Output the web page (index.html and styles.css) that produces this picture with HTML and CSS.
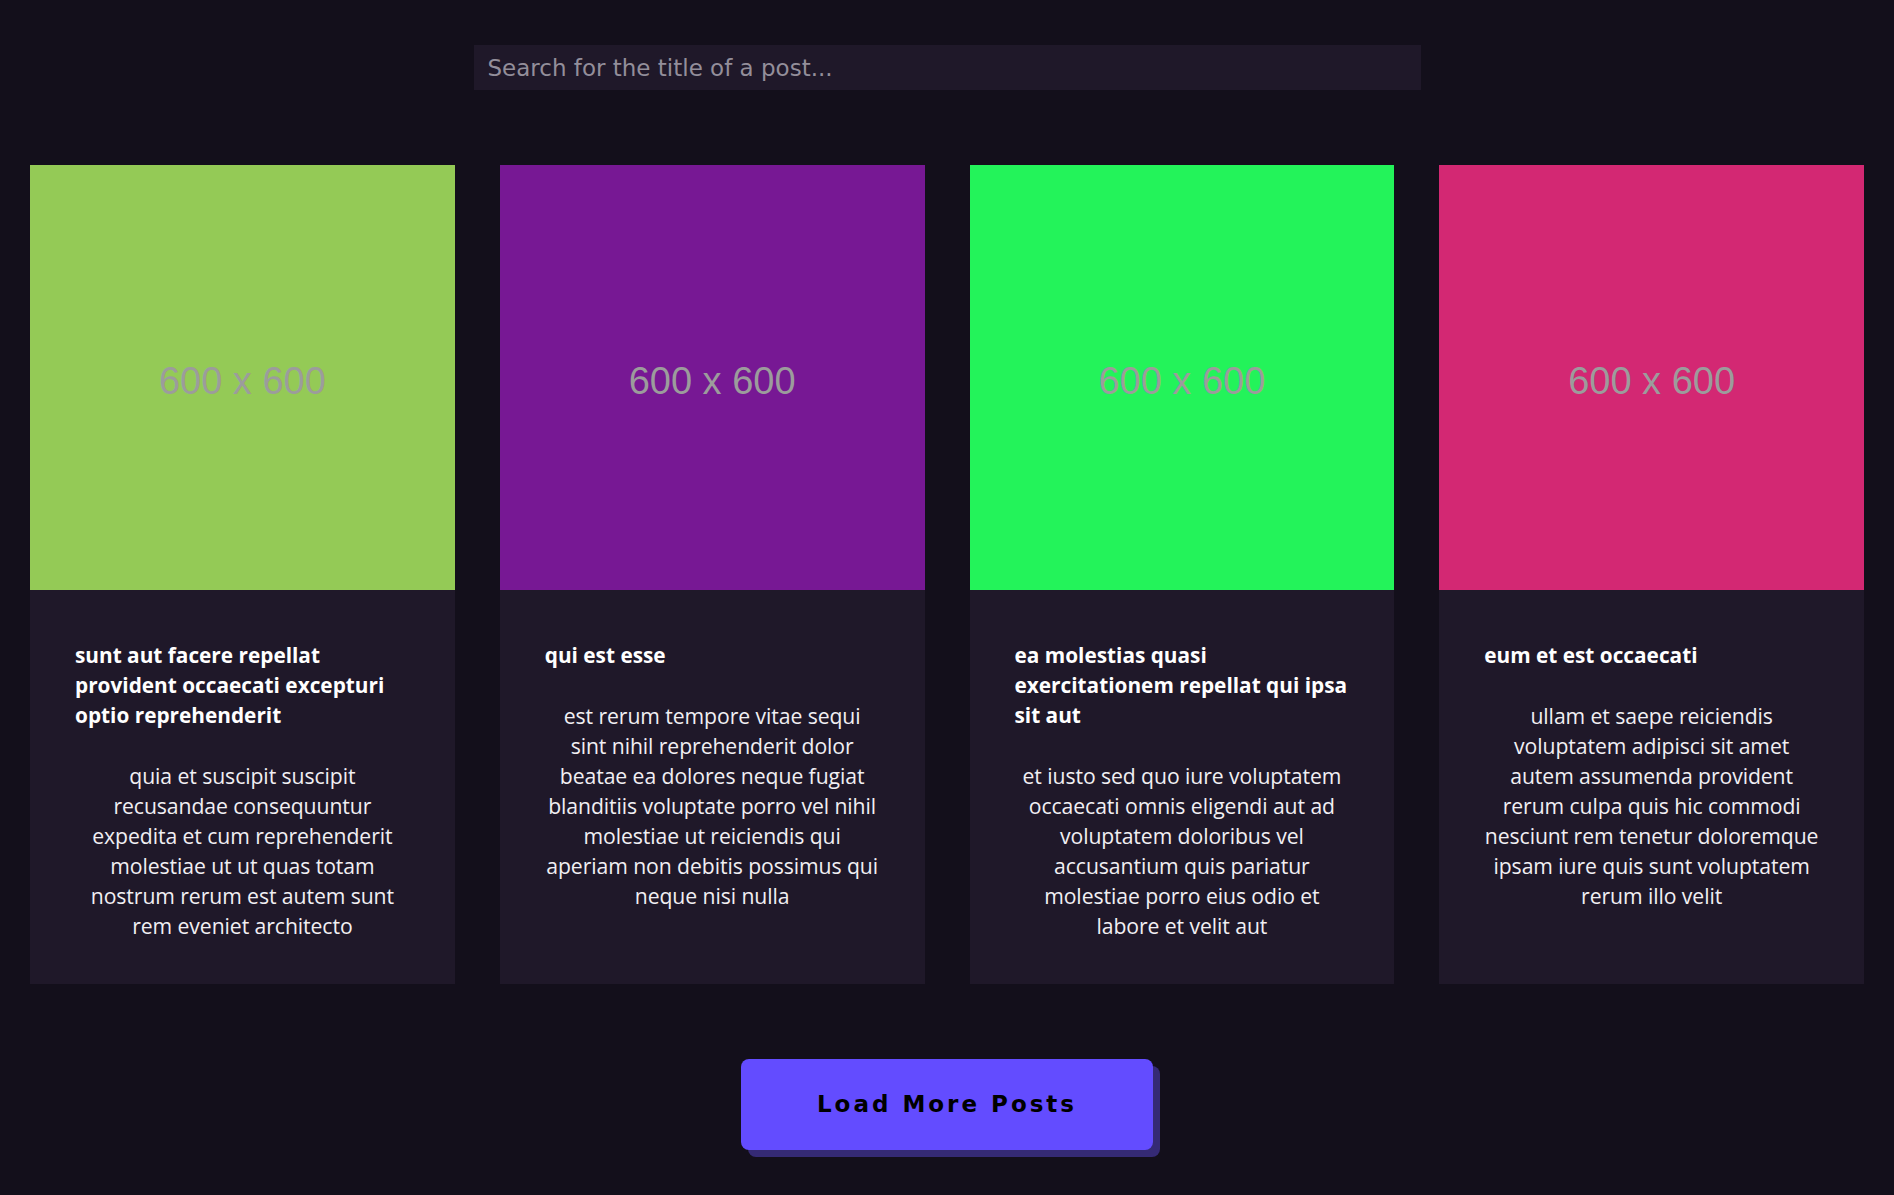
FILE: index.html
```html
<!DOCTYPE html>
<html lang="en">
<head>
<meta charset="utf-8">
<title>Posts</title>
<link rel="stylesheet" href="styles.css">
</head>
<body>
<main class="page">
  <div class="search-row">
    <input class="search" type="text" placeholder="Search for the title of a post...">
  </div>
  <section class="grid">
    <article class="card">
      <div class="thumb thumb-lime"><span>600 x 600</span></div>
      <div class="card-body">
        <h3 class="title">sunt aut facere repellat provident occaecati excepturi optio reprehenderit</h3>
        <p class="text">quia et suscipit suscipit recusandae consequuntur expedita et cum reprehenderit molestiae ut ut quas totam nostrum rerum est autem sunt rem eveniet architecto</p>
      </div>
    </article>
    <article class="card">
      <div class="thumb thumb-purple"><span>600 x 600</span></div>
      <div class="card-body">
        <h3 class="title">qui est esse</h3>
        <p class="text">est rerum tempore vitae sequi sint nihil reprehenderit dolor beatae ea dolores neque fugiat blanditiis voluptate porro vel nihil molestiae ut reiciendis qui aperiam non debitis possimus qui neque nisi nulla</p>
      </div>
    </article>
    <article class="card">
      <div class="thumb thumb-green"><span>600 x 600</span></div>
      <div class="card-body">
        <h3 class="title">ea molestias quasi exercitationem repellat qui ipsa sit aut</h3>
        <p class="text">et iusto sed quo iure voluptatem occaecati omnis eligendi aut ad voluptatem doloribus vel accusantium quis pariatur molestiae porro eius odio et labore et velit aut</p>
      </div>
    </article>
    <article class="card">
      <div class="thumb thumb-pink"><span>600 x 600</span></div>
      <div class="card-body">
        <h3 class="title">eum et est occaecati</h3>
        <p class="text">ullam et saepe reiciendis voluptatem adipisci sit amet autem assumenda provident rerum culpa quis hic commodi nesciunt rem tenetur doloremque ipsam iure quis sunt voluptatem rerum illo velit</p>
      </div>
    </article>
  </section>
  <div class="more-row">
    <button class="more" type="button">Load More Posts</button>
  </div>
</main>
</body>
</html>
```
FILE: styles.css
```css
html, body {
  margin: 0;
  padding: 0;
  background: #130f1b;
}

.page {
  padding: 45px 0 45px;
  display: flex;
  flex-direction: column;
  gap: 75px;
}

.search-row {
  display: flex;
  justify-content: center;
}

.search {
  width: 50%;
  height: 45px;
  box-sizing: border-box;
  border: none;
  outline: none;
  background: #1f1829;
  color: #ddd;
  padding: 0 14px;
  font-family: "DejaVu Sans", Verdana, sans-serif;
  font-size: 23px;
}

.search::placeholder {
  color: #938e9a;
}

.grid {
  display: grid;
  grid-template-columns: repeat(4, 1fr);
  gap: 45px;
  padding: 0 30px;
}

.card {
  background: #1f1829;
  display: flex;
  flex-direction: column;
}

.thumb {
  aspect-ratio: 1 / 1;
  display: flex;
  align-items: center;
  justify-content: center;
  font-family: "Liberation Sans", Arial, sans-serif;
  font-size: 38px;
  color: #9c9c9c;
}

.thumb span {
  transform: translateY(4px);
}

.thumb-lime { background: #94ca56; }
.thumb-purple { background: #771894; }
.thumb-green { background: #23f35a; }
.thumb-pink { background: #d32873; }

.card-body {
  padding: 50px 45px 43px;
  display: flex;
  flex-direction: column;
  gap: 31px;
  font-family: "Open Sans", "Noto Sans", sans-serif;
  color: #f1eff3;
}

.title {
  margin: 0;
  font-size: 20.8px;
  line-height: 30px;
  font-weight: 700;
  color: #ffffff;
  text-align: left;
}

.text {
  margin: 0;
  font-size: 21.2px;
  line-height: 30px;
  font-weight: 400;
  letter-spacing: -0.08px;
  text-align: center;
}

.more-row {
  display: flex;
  justify-content: center;
}

.more {
  width: 412px;
  height: 91px;
  border: none;
  border-radius: 8px;
  background: #634cff;
  box-shadow: 7px 7px 0 #352a75;
  color: #000;
  font-family: "DejaVu Sans", Verdana, sans-serif;
  font-weight: 700;
  font-size: 23px;
  letter-spacing: 3px;
  cursor: pointer;
}
```
